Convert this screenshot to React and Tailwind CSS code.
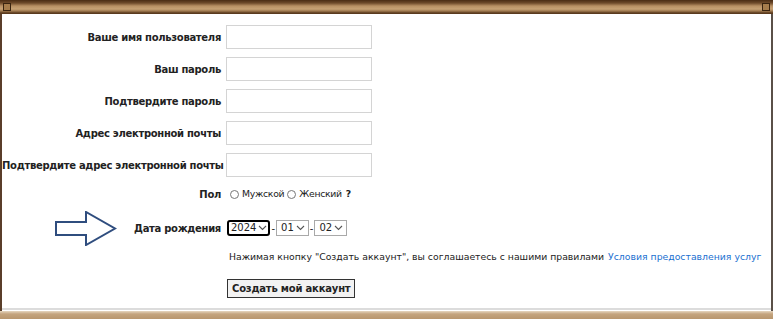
import React from 'react';

const fields = [
  'Ваше имя пользователя',
  'Ваш пароль',
  'Подтвердите пароль',
  'Адрес электронной почты',
  'Подтвердите адрес электронной почты',
];

const Arrow = () => (
  <svg width="62" height="35" viewBox="0 0 62 35" className="block">
    <path
      d="M1 11 L31 11 L31 1 L60 17.5 L31 34 L31 24 L1 24 Z"
      fill="#fff"
      stroke="#2f4d7e"
      strokeWidth="2"
      strokeLinejoin="miter"
    />
  </svg>
);

const Sel = ({ value, focused }) => (
  <span
    className={
      'inline-flex items-center h-[16px] gap-[1px] text-[10px] leading-none bg-white ' +
      (focused ? 'px-[1px] border-2 border-black rounded-[3px]' : 'px-[3px] border border-[#a9a9a9]')
    }
  >
    <span className="px-[1px]">{value}</span>
    <svg width="9" height="6" viewBox="0 0 9 6">
      <path d="M1 1 L4.5 4.5 L8 1" fill="none" stroke="#555" strokeWidth="1.1" />
    </svg>
  </span>
);

const Radio = () => (
  <span className="inline-block w-[9px] h-[9px] rounded-full border border-[#777] bg-white mr-[3px]" />
);

export default function App() {
  return (
    <div className="w-[773px] h-[319px] bg-white flex flex-col overflow-hidden font-['DejaVu_Sans',sans-serif] text-[#222]">
      {/* top frame */}
      <div className="h-[14px] shrink-0 flex items-center justify-between px-[3px] bg-[linear-gradient(#4a2c14_0px,#6e4a2a_3px,#b89064_6px,#c7a275_9px,#a07a50_11px,#5a3a1e_13px)]">
        <span className="w-[8px] h-[8px] border border-[#3a2410] bg-[#a57c4c]" />
        <span className="w-[8px] h-[8px] border border-[#3a2410] bg-[#a57c4c]" />
      </div>

      <div className="flex-1 flex border-l-2 border-l-[#5a3e2a] border-r-2 border-r-[#5a5048]">
        <div className="flex-1 flex flex-col pt-[7px]">
          {fields.map((f) => (
            <div key={f} className="flex items-center h-[32px]">
              <div className="w-[219px] text-right text-[10px] font-bold tracking-[-0.3px] whitespace-nowrap">{f}</div>
              <div className="ml-[5px] w-[146px] h-[24px] border border-[#d4d4d4]" />
            </div>
          ))}

          <div className="flex items-center h-[26px]">
            <div className="w-[219px] text-right text-[10px] font-bold tracking-[-0.3px]">Пол</div>
            <div className="ml-[9px] flex items-center text-[9.3px] tracking-[-0.3px]">
              <Radio />
              <span>Мужской</span>
              <span className="w-[3px]" />
              <Radio />
              <span>Женский</span>
              <span className="ml-[4px] font-bold">?</span>
            </div>
          </div>

          <div className="mt-[4px] flex items-center h-[34px]">
            <div className="w-[219px] flex items-center justify-end">
              <Arrow />
              <span className="ml-[17px] text-[10px] font-bold tracking-[-0.3px]">Дата рождения</span>
            </div>
            <div className="ml-[6px] flex items-center text-[10px]">
              <Sel value="2024" focused />
              <span className="mx-[1px]">-</span>
              <Sel value="01" />
              <span className="mx-[1px]">-</span>
              <Sel value="02" />
            </div>
          </div>

          <div className="h-[24px] flex items-center pl-[227px] text-[9.3px] whitespace-nowrap">
            Нажимая кнопку "Создать аккаунт", вы соглашаетесь с нашими правилами{' '}
            <a className="ml-[4px] text-[#1a6fd0]">Условия предоставления услуг</a>
          </div>

          <div className="flex pl-[225px] pt-[10px]">
            <button className="h-[19px] px-[4px] border border-[#333] bg-[#f2f2f2] text-[10px] font-bold tracking-[-0.2px] leading-none">
              Создать мой аккаунт
            </button>
          </div>

          <div className="mt-auto h-[2px] bg-[#dcdcdc] mb-[1px]" />
        </div>
      </div>

      {/* bottom frame */}
      <div className="h-[8px] shrink-0 bg-[linear-gradient(#e6d6c0_0px,#c4a47e_3px,#b8966e_8px)]" />
    </div>
  );
}
